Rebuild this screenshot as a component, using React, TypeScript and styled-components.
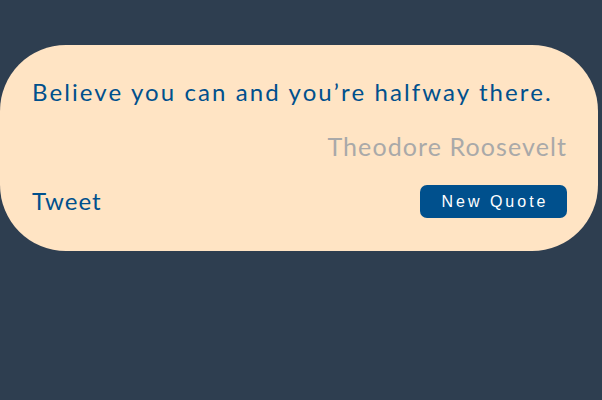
import React from "react";
import styled, { createGlobalStyle } from "styled-components";

const GlobalStyle = createGlobalStyle`
  html, body {
    margin: 0;
    padding: 0;
    background: #2e3e50;
  }
  body {
    font-family: "Lato", "Liberation Sans", sans-serif;
  }
`;

const Page = styled.main`
  padding-top: 45px;
`;

const Card = styled.section`
  width: 598px;
  height: 206px;
  box-sizing: border-box;
  background: #ffe4c4;
  border-radius: 66px;
  padding: 32px 31px 0 32px;
  display: flex;
  flex-direction: column;
`;

const Quote = styled.p`
  margin: 0;
  font-size: 24px;
  line-height: 30px;
  letter-spacing: 2.1px;
  color: #00508d;
`;

const Author = styled.p`
  margin: 24px 0 0;
  text-align: right;
  font-size: 25px;
  line-height: 30px;
  letter-spacing: 1.1px;
  color: #a9a9a9;
`;

const Footer = styled.div`
  margin-top: 24px;
  display: flex;
  justify-content: space-between;
  align-items: center;
`;

const TweetLink = styled.a`
  font-size: 24px;
  line-height: 30px;
  letter-spacing: 1px;
  color: #00508d;
  text-decoration: none;
  margin-top: -2px;
`;

const NewQuoteButton = styled.button`
  width: 147px;
  height: 33px;
  border: none;
  border-radius: 7px;
  background: #00508d;
  color: #ffffff;
  font-family: "Liberation Sans", Arial, sans-serif;
  font-size: 16px;
  letter-spacing: 3px;
  padding: 0 0 0 3px;
  cursor: pointer;
`;

export default function App() {
  return (
    <>
      <GlobalStyle />
      <Page>
        <Card>
          <Quote>Believe you can and you’re halfway there.</Quote>
          <Author>Theodore Roosevelt</Author>
          <Footer>
            <TweetLink href="#">Tweet</TweetLink>
            <NewQuoteButton>New Quote</NewQuoteButton>
          </Footer>
        </Card>
      </Page>
    </>
  );
}
